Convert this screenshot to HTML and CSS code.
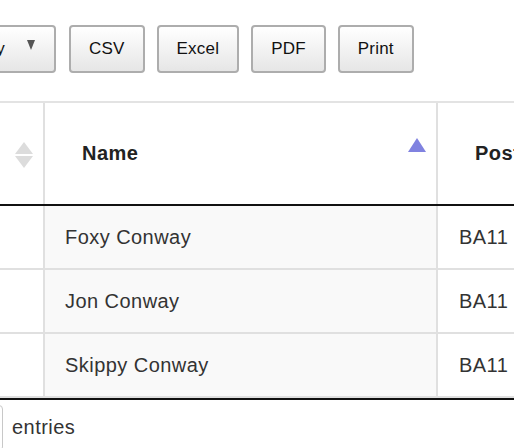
FILE: index.html
```html
<!DOCTYPE html>
<html>
<head>
<meta charset="utf-8">
<link rel="stylesheet" href="styles.css">
</head>
<body>
<div class="page">
  <div class="toolbar">
    <button class="btn btn-colvis"><span class="btn-label">Column visibility</span><span class="caret"></span></button>
    <button class="btn">CSV</button>
    <button class="btn">Excel</button>
    <button class="btn">PDF</button>
    <button class="btn">Print</button>
  </div>

  <div class="table">
    <div class="row head">
      <div class="cell c1"><span class="sort-both"><span class="tri-up"></span><span class="tri-down"></span></span></div>
      <div class="cell c2 th">Name<span class="sort-asc"></span></div>
      <div class="cell c3 th">Postcode</div>
    </div>
    <div class="row">
      <div class="cell c1"></div>
      <div class="cell c2 sorted">Foxy Conway</div>
      <div class="cell c3">BA11 1AA</div>
    </div>
    <div class="row">
      <div class="cell c1"></div>
      <div class="cell c2 sorted">Jon Conway</div>
      <div class="cell c3">BA11 1AA</div>
    </div>
    <div class="row last">
      <div class="cell c1"></div>
      <div class="cell c2 sorted">Skippy Conway</div>
      <div class="cell c3">BA11 1AA</div>
    </div>
  </div>

  <div class="footer">
    <div class="select"></div>
    <span class="entries">entries</span>
  </div>
</div>
</body>
</html>
```

FILE: styles.css
```css
* { box-sizing: border-box; }
html, body { margin: 0; padding: 0; background: #fff; }
.page {
  width: 514px;
  height: 448px;
  overflow: hidden;
  font-family: "Liberation Sans", Arial, sans-serif;
  color: #333;
}
.toolbar {
  display: flex;
  gap: 12px;
  margin-top: 25px;
  height: 48px;
}
.btn {
  flex: none;
  height: 48px;
  padding: 0 18px;
  border: 2px solid #adadad;
  border-radius: 4px;
  background: linear-gradient(#ffffff, #e6e6e6);
  font-family: "Liberation Sans", Arial, sans-serif;
  font-size: 17px;
  letter-spacing: 0.2px;
  color: #111;
}
.btn-colvis {
  width: 170px;
  margin-left: -114px;
  margin-right: 1px;
  display: flex;
  align-items: center;
  justify-content: flex-end;
  gap: 22px;
  padding-right: 19px;
  white-space: nowrap;
}
.caret {
  width: 0;
  height: 0;
  border-left: 4.5px solid transparent;
  border-right: 4.5px solid transparent;
  border-top: 10px solid #555;
  margin-top: -8px;
}
.table {
  margin-top: 28px;
  margin-left: -20px;
  width: 700px;
  border-top: 2px solid #e3e3e3;
  border-bottom: 2px solid #111;
}
.row {
  display: grid;
  grid-template-columns: 63px 393px 244px;
  height: 64px;
  border-bottom: 2px solid #e0e0e0;
  font-size: 20px;
  letter-spacing: 0.45px;
}
.row.head {
  height: 103px;
  border-bottom: 2px solid #111;
}
.cell {
  display: flex;
  align-items: center;
  padding-left: 20px;
}
.c2, .c3 { border-left: 2px solid #e0e0e0; }
.c3 { padding-left: 21px; }
.sorted { background: #f9f9f9; }
.th {
  position: relative;
  font-weight: bold;
  color: #222;
  padding-left: 37px;
  letter-spacing: 0.5px;
}
.c3.th { padding-left: 37px; }
.sort-asc {
  position: absolute;
  right: 10px;
  top: 35px;
  width: 0;
  height: 0;
  border-left: 9px solid transparent;
  border-right: 9px solid transparent;
  border-bottom: 14px solid #8082e0;
}
.head .c1 { padding-left: 35px; }
.sort-both {
  display: flex;
  flex-direction: column;
  gap: 2px;
  margin-top: 2px;
}
.tri-up, .tri-down {
  width: 0;
  height: 0;
  border-left: 9px solid transparent;
  border-right: 9px solid transparent;
}
.tri-up { border-bottom: 12px solid #dcdcdc; }
.tri-down { border-top: 12px solid #dcdcdc; }
.footer {
  display: flex;
  align-items: center;
  gap: 9px;
  margin-top: 5px;
  height: 48px;
}
.select {
  width: 40px;
  height: 46px;
  margin-left: -37px;
  border: 1px solid #c8c8c8;
  border-radius: 4px;
  align-self: flex-start;
}
.entries {
  font-size: 20px;
  letter-spacing: 0.45px;
  color: #333;
  margin-top: -3px;
}
```
